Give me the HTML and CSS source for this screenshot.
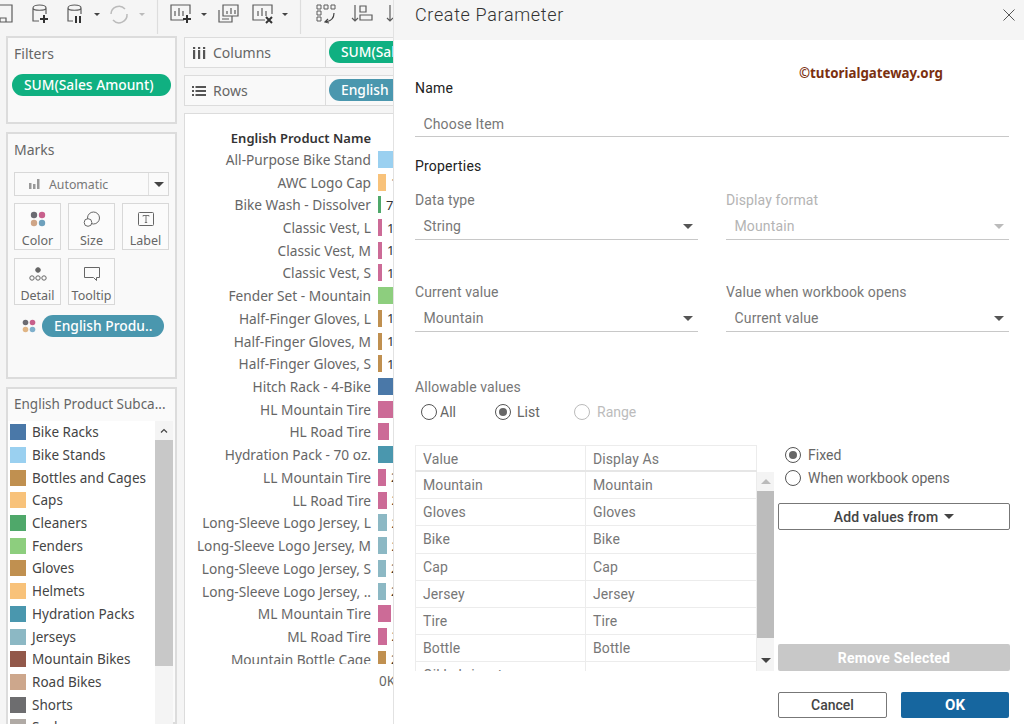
FILE: index.html
```html
<!DOCTYPE html>
<html lang="en">
<head>
<meta charset="utf-8">
<title>Create Parameter</title>
<link rel="stylesheet" href="styles.css">
</head>
<body>
<div class="app">
  <div class="workbook">
    <svg class="toolbar" width="394" height="34" viewBox="0 0 394 34" fill="none" stroke="#5c5c5c" stroke-width="1.2">
      <path d="M-2 5H12V22H-2M0 22V18H6V22"/>
      <path d="M33 8c0-4 13-4 13 0V14M33 8V21H39M33 8c0 3 13 3 13 0"/>
      <path d="M44 15V23M40 19H48" stroke="#333" stroke-width="2"/>
      <path d="M68 8c0-4 13-4 13 0V14M68 8V21H73M68 8c0 3 13 3 13 0"/>
      <path d="M76 16V23M80 16V23" stroke="#333" stroke-width="2"/>
      <path d="M94 13H100L97 16Z" fill="#444" stroke="none"/>
      <path d="M111 14a8 8 0 0 1 14-5M127 14a8 8 0 0 1-14 6" stroke="#bbb" stroke-width="1.5"/>
      <path d="M139 13H145L142 16Z" fill="#bbb" stroke="none"/>
      <path d="M157.500 0V34M300.500 0V34" stroke="#ddd"/>
      <path d="M184 20H171V5H190V14"/>
      <path d="M175 16V11M179 16V8M183 16V11"/>
      <path d="M187 15V23M183 19H191" stroke="#333" stroke-width="2"/>
      <path d="M201 13H207L204 16Z" fill="#444" stroke="none"/>
      <path d="M223 5H238V16H223ZM219 10V22H232V16"/>
      <path d="M227 14V11M231 14V8M235 14V10M222 19H229"/>
      <path d="M265 20H253V5H272V14"/>
      <path d="M258 16V11M262 16V8M266 16V11"/>
      <path d="M266 17L272 23M272 17L266 23" stroke="#333" stroke-width="2"/>
      <path d="M282 13H288L285 16Z" fill="#444" stroke="none"/>
      <path d="M317 5H321V9H317ZM324 5H328V9H324ZM331 5H335V9H331ZM317 11H321V15H317ZM317 17H321V21H317Z" stroke-width="1"/>
      <path d="M334 13c0 5-3 8-8 9M328 19L325 22L329 23" stroke="#444"/>
      <path d="M355 5V21M352 18L355 21L358 18M360 6V12H366V6ZM360 15V20H372V15Z"/>
      <path d="M390 5V21M387 18L390 21L393 18"/>
    </svg>
    <div class="panes">
      <aside class="side">
        <section class="panel filters">
          <h2 class="panel-title">Filters</h2>
          <div class="pill green wide">SUM(Sales Amount)</div>
        </section>
        <section class="panel marks">
          <h2 class="panel-title">Marks</h2>
          <div class="select-auto">
            <span class="auto-label">
              <svg width="12" height="10" viewBox="0 0 12 10" fill="#999"><rect x="0" y="4" width="2.500" height="6"/><rect x="4" y="5" width="2.500" height="5"/><rect x="8" y="0" width="2.500" height="10"/></svg>
              Automatic
            </span>
            <span class="auto-arrow"></span>
          </div>
          <div class="cards">
            <div class="card">
              <svg width="16" height="16" viewBox="0 0 16 16"><circle cx="4" cy="4" r="3.200" fill="#6b6b72"/><circle cx="12" cy="4" r="3.200" fill="#c8608c"/><circle cx="4" cy="12" r="3.200" fill="#cfa587"/><circle cx="12" cy="12" r="3.200" fill="#6ea0bc"/></svg>
              <span>Color</span>
            </div>
            <div class="card">
              <svg width="18" height="16" viewBox="0 0 18 16" fill="none" stroke="#666"><circle cx="10.500" cy="7" r="6"/><circle cx="5" cy="11.500" r="3.800" fill="#fff"/></svg>
              <span>Size</span>
            </div>
            <div class="card">
              <svg width="16" height="16" viewBox="0 0 16 16" fill="none" stroke="#666"><rect x="0.500" y="1.500" width="15" height="13" rx="1"/><path d="M5 5.500V4.500H11V5.500M8 4.500V11.500M6.800 11.500H9.200" stroke-width="0.900"/></svg>
              <span>Label</span>
            </div>
            <div class="card">
              <svg width="18" height="16" viewBox="0 0 18 16" fill="none" stroke="#666"><circle cx="9" cy="4" r="2.300" fill="#666"/><circle cx="3" cy="12" r="2.200"/><circle cx="9" cy="12" r="2.200"/><circle cx="15" cy="12" r="2.200"/></svg>
              <span>Detail</span>
            </div>
            <div class="card">
              <svg width="16" height="16" viewBox="0 0 16 16" fill="none" stroke="#666"><path d="M0.500 1.500H15.500V11.500H12.500V14.500L9.500 11.500H0.500Z"/></svg>
              <span>Tooltip</span>
            </div>
          </div>
          <div class="mark-row">
            <svg width="14" height="14" viewBox="0 0 16 16"><circle cx="4" cy="4" r="3.200" fill="#6b6b72"/><circle cx="12" cy="4" r="3.200" fill="#c8608c"/><circle cx="4" cy="12" r="3.200" fill="#e0b585"/><circle cx="12" cy="12" r="3.200" fill="#7fb0cc"/></svg>
            <div class="pill teal mark-pill">English Produ..</div>
          </div>
        </section>
        <section class="panel legend">
          <h2 class="legend-title">English Product Subca...</h2>
          <div class="legend-body">
            <ul class="legend-list">
              <li><i class="c-blue"></i>Bike Racks</li>
              <li><i class="c-sky"></i>Bike Stands</li>
              <li><i class="c-brown"></i>Bottles and Cages</li>
              <li><i class="c-orange"></i>Caps</li>
              <li><i class="c-green"></i>Cleaners</li>
              <li><i class="c-lime"></i>Fenders</li>
              <li><i class="c-brown"></i>Gloves</li>
              <li><i class="c-orange"></i>Helmets</li>
              <li><i class="c-teal"></i>Hydration Packs</li>
              <li><i class="c-jersey"></i>Jerseys</li>
              <li><i class="c-mtb"></i>Mountain Bikes</li>
              <li><i class="c-road"></i>Road Bikes</li>
              <li><i class="c-short"></i>Shorts</li>
              <li><i class="c-sock"></i>Socks</li>
            </ul>
            <div class="legend-scroll">
              <div class="legend-up">
                <svg width="8" height="5" viewBox="0 0 8 5" fill="none" stroke="#444" stroke-width="1.200"><path d="M1 4.500L4 1.500L7 4.500"/></svg>
              </div>
              <div class="legend-thumb"></div>
            </div>
          </div>
        </section>
      </aside>
      <main class="sheet">
        <div class="shelf">
          <div class="shelf-label">
            <svg width="14" height="12" viewBox="0 0 14 12" fill="#555"><rect x="1" y="3" width="2.200" height="9"/><rect x="6" y="3" width="2.200" height="9"/><rect x="11" y="3" width="2.200" height="9"/><rect x="1" y="0" width="2.200" height="2"/><rect x="6" y="0" width="2.200" height="2"/><rect x="11" y="0" width="2.200" height="2"/></svg>
            Columns
          </div>
          <div class="pill green shelf-pill">SUM(Sales Amount)</div>
        </div>
        <div class="shelf">
          <div class="shelf-label">
            <svg width="14" height="12" viewBox="0 0 14 12" fill="#555"><rect x="0" y="1" width="2" height="2"/><rect x="3.500" y="1" width="10.500" height="2"/><rect x="0" y="5" width="2" height="2"/><rect x="3.500" y="5" width="10.500" height="2"/><rect x="0" y="9" width="2" height="2"/><rect x="3.500" y="9" width="10.500" height="2"/></svg>
            Rows
          </div>
          <div class="pill teal shelf-pill">English Product Name</div>
        </div>
        <div class="view">
          <div class="chart-head">English Product Name</div>
          <div class="chart-rows">
            <div class="row"><span class="name">All-Purpose Bike Stand</span><b class="bar c-sky w-full"></b></div>
            <div class="row"><span class="name">AWC Logo Cap</span><b class="bar c-orange w-8"></b><span class="val">1</span></div>
            <div class="row"><span class="name">Bike Wash - Dissolver</span><b class="bar c-green w-3"></b><span class="val">7</span></div>
            <div class="row"><span class="name">Classic Vest, L</span><b class="bar c-pink w-4"></b><span class="val">1</span></div>
            <div class="row"><span class="name">Classic Vest, M</span><b class="bar c-pink w-4"></b><span class="val">1</span></div>
            <div class="row"><span class="name">Classic Vest, S</span><b class="bar c-pink w-4"></b><span class="val">1</span></div>
            <div class="row"><span class="name">Fender Set - Mountain</span><b class="bar c-lime w-full"></b></div>
            <div class="row"><span class="name">Half-Finger Gloves, L</span><b class="bar c-brown w-4"></b><span class="val">1</span></div>
            <div class="row"><span class="name">Half-Finger Gloves, M</span><b class="bar c-brown w-4"></b><span class="val">1</span></div>
            <div class="row"><span class="name">Half-Finger Gloves, S</span><b class="bar c-brown w-4"></b><span class="val">1</span></div>
            <div class="row"><span class="name">Hitch Rack - 4-Bike</span><b class="bar c-blue w-full"></b></div>
            <div class="row"><span class="name">HL Mountain Tire</span><b class="bar c-pink w-full"></b></div>
            <div class="row"><span class="name">HL Road Tire</span><b class="bar c-pink w-11"></b></div>
            <div class="row"><span class="name">Hydration Pack - 70 oz.</span><b class="bar c-teal w-full"></b></div>
            <div class="row"><span class="name">LL Mountain Tire</span><b class="bar c-pink w-8"></b><span class="val">2</span></div>
            <div class="row"><span class="name">LL Road Tire</span><b class="bar c-pink w-9"></b><span class="val">2</span></div>
            <div class="row"><span class="name">Long-Sleeve Logo Jersey, L</span><b class="bar c-jersey w-9"></b><span class="val">2</span></div>
            <div class="row"><span class="name">Long-Sleeve Logo Jersey, M</span><b class="bar c-jersey w-9"></b><span class="val">2</span></div>
            <div class="row"><span class="name">Long-Sleeve Logo Jersey, S</span><b class="bar c-jersey w-8"></b><span class="val">2</span></div>
            <div class="row"><span class="name">Long-Sleeve Logo Jersey, ..</span><b class="bar c-jersey w-8"></b><span class="val">2</span></div>
            <div class="row"><span class="name">ML Mountain Tire</span><b class="bar c-pink w-13"></b></div>
            <div class="row"><span class="name">ML Road Tire</span><b class="bar c-pink w-9"></b><span class="val">2</span></div>
            <div class="row"><span class="name">Mountain Bottle Cage</span><b class="bar c-brown w-8"></b><span class="val">2</span></div>
          </div>
          <div class="axis">0K</div>
        </div>
      </main>
    </div>
  </div>

  <section class="dialog">
    <header class="dialog-head">
      <h1 class="dialog-title">Create Parameter</h1>
      <svg class="close" width="12" height="12" viewBox="0 0 12 12" stroke="#555" fill="none"><path d="M0.500 0.500L11.500 11.500M11.500 0.500L0.500 11.500"/></svg>
    </header>
    <div class="dialog-body">
      <div class="watermark">©tutorialgateway.org</div>
      <div class="heading name-heading">Name</div>
      <div class="input name-input">Choose Item</div>
      <div class="heading props-heading">Properties</div>
      <div class="prop-grid">
        <div class="field">
          <label class="field-label">Data type</label>
          <div class="input select">String<span class="caret"></span></div>
        </div>
        <div class="field is-disabled">
          <label class="field-label">Display format</label>
          <div class="input select">Mountain<span class="caret"></span></div>
        </div>
        <div class="field">
          <label class="field-label">Current value</label>
          <div class="input select">Mountain<span class="caret"></span></div>
        </div>
        <div class="field">
          <label class="field-label">Value when workbook opens</label>
          <div class="input select">Current value<span class="caret"></span></div>
        </div>
      </div>
      <div class="field-label allow-label">Allowable values</div>
      <div class="radios">
        <span class="radio r-all"><i class="dot"></i>All</span>
        <span class="radio r-list"><i class="dot on"></i>List</span>
        <span class="radio r-range is-off"><i class="dot"></i>Range</span>
      </div>
      <div class="list-area">
        <div class="table-wrap">
          <div class="tr th"><span>Value</span><span>Display As</span></div>
          <div class="tbody">
            <div class="tbody-rows">
              <div class="tr"><span>Mountain</span><span>Mountain</span></div>
              <div class="tr"><span>Gloves</span><span>Gloves</span></div>
              <div class="tr"><span>Bike</span><span>Bike</span></div>
              <div class="tr"><span>Cap</span><span>Cap</span></div>
              <div class="tr"><span>Jersey</span><span>Jersey</span></div>
              <div class="tr"><span>Tire</span><span>Tire</span></div>
              <div class="tr"><span>Bottle</span><span>Bottle</span></div>
              <div class="tr"><span>Oil Lubricant</span><span></span></div>
            </div>
          </div>
        </div>
        <div class="table-scroll">
          <span class="sc-btn"><i class="tri-up"></i></span>
          <span class="sc-thumb"></span>
          <span class="sc-btn sc-down"><i class="tri-down"></i></span>
        </div>
        <div class="list-side">
          <span class="radio side-radio"><i class="dot on"></i>Fixed</span>
          <span class="radio side-radio"><i class="dot"></i>When workbook opens</span>
          <button class="btn add-btn">Add values from<i class="tri-down dark"></i></button>
          <button class="btn remove-btn">Remove Selected</button>
        </div>
      </div>
      <div class="actions">
        <button class="btn cancel">Cancel</button>
        <button class="btn ok">OK</button>
      </div>
    </div>
  </section>
</div>
</body>
</html>
```

FILE: styles.css
```css
* { box-sizing: border-box; }
html, body { margin: 0; padding: 0; height: 100%; }
body { font-family: "Noto Sans", "Open Sans", sans-serif; font-size: 13px; color: #555; background: #f5f5f5; overflow: hidden; }
h1, h2, ul { margin: 0; padding: 0; font-weight: normal; }
li { list-style: none; }
i, b { display: block; font-style: normal; }

.app { display: flex; width: 1024px; height: 724px; overflow: hidden; }
.workbook { width: 394px; flex: none; height: 724px; overflow: hidden; border-right: 1px solid #e2e2e2; }
.toolbar { display: block; }
.panes { display: flex; height: 690px; }

.side { width: 184px; flex: none; padding: 2px 7px 0 6px; display: flex; flex-direction: column; gap: 8px; border-right: 0; }
.panel { border: 2px solid #dcdcdc; background: #f9f9f9; }
.panel-title { font-size: 14px; line-height: 18px; color: #666; padding: 7px 0 0 6px; }
.filters { height: 88px; padding: 0 4px; }
.filters .panel-title { padding-left: 2px; }
.pill { border-radius: 12px; color: #fff; font-size: 13.800px; font-weight: 500; line-height: 22px; white-space: nowrap; overflow: hidden; }
.green { background: #10b081; }
.teal { background: #4a97ae; }
.wide { width: 159px; height: 22px; margin: 11px 0 0 0; padding-left: 12px; }

.marks { height: 247px; padding: 0 6px; }
.marks .panel-title { padding: 7px 0 0 0; }
.select-auto { display: flex; height: 24px; margin-top: 13px; border: 1px solid #d8d8d8; background: #fafafa; width: 155px; }
.auto-label { flex: 1; display: flex; align-items: center; gap: 8px; padding-left: 14px; color: #777; font-size: 12.300px; border-right: 1px solid #e0e0e0; }
.auto-arrow { width: 19px; position: relative; }
.auto-arrow::after { content: ""; position: absolute; left: 5px; top: 9px; border: 5px solid transparent; border-top: 5px solid #444; border-bottom: 0; }
.cards { display: grid; grid-template-columns: 47px 47px 47px; column-gap: 7px; row-gap: 8px; margin-top: 7px; }
.card { height: 47px; border: 1px solid #d8d8d8; background: #fbfbfb; display: flex; flex-direction: column; align-items: center; padding-top: 7px; }
.card svg { height: 16px; flex: none; }
.card span { font-size: 12.500px; color: #666; line-height: 16px; margin-top: 6px; }
.mark-row { display: flex; align-items: center; gap: 6px; padding-left: 8px; margin-top: 10px; }
.mark-pill { width: 122px; height: 22px; padding-left: 12px; }

.legend { flex: 1; min-height: 0; padding: 0; background: #fafafa; }
.legend-title { font-size: 13.500px; line-height: 18px; color: #666; padding: 6px 0 0 6px; height: 32px; white-space: nowrap; }
.legend-body { display: flex; background: #fff; height: 310px; overflow: hidden; margin-right: 2px; }
.legend-list { flex: 1; padding: 0 0 0 2px; }
.legend-list li { display: flex; align-items: center; height: 22.700px; color: #444; font-size: 13.500px; white-space: nowrap; }
.legend-list i { width: 16px; height: 16px; margin-right: 6px; flex: none; }
.legend-scroll { width: 18px; background: #f4f4f4; }
.legend-up { height: 19px; display: flex; align-items: center; justify-content: center; }
.legend-thumb { height: 226px; background: #c8c8c8; }

.c-blue { background: #4a78a8; }
.c-sky { background: #9ad0f0; }
.c-brown { background: #c09050; }
.c-orange { background: #f8c27a; }
.c-green { background: #4fa86a; }
.c-lime { background: #8dce7e; }
.c-teal { background: #4a97ae; }
.c-jersey { background: #8cb8c4; }
.c-mtb { background: #92584a; }
.c-road { background: #cda78c; }
.c-short { background: #6d6d6f; }
.c-sock { background: #b0aaa5; }
.c-pink { background: #cc6b97; }

.sheet { flex: 1; min-width: 0; padding-top: 3px; background: #f5f5f5; }
.shelf { display: flex; height: 31px; margin-bottom: 7px; border: 1px solid #dcdcdc; border-right: 0; background: #f9f9f9; overflow: hidden; }
.shelf-label { width: 141px; flex: none; display: flex; align-items: center; gap: 7px; padding-left: 7px; border-right: 1px solid #dcdcdc; color: #666; font-size: 14px; }
.shelf-pill { height: 22px; margin: 3px 0 0 3px; padding-left: 12px; width: 160px; flex: none; }
.view { background: #fff; border: 1px solid #dcdcdc; border-right: 0; height: 612px; overflow: hidden; }
.chart-head { height: 34px; padding: 14px 0 0 0; text-align: right; font-size: 13px; line-height: 20px; font-weight: 600; color: #333; width: 186px; white-space: nowrap; }
.chart-rows { height: 516px; overflow: hidden; }
.row { display: flex; align-items: center; height: 22.720px; }
.name { width: 186px; flex: none; text-align: right; font-size: 13.700px; color: #666; white-space: nowrap; }
.bar { height: 17px; margin-left: 7px; flex: none; }
.val { font-size: 13px; color: #333; margin-left: 5px; }
.w-3 { width: 3px; }
.w-4 { width: 4px; }
.w-8 { width: 8px; }
.w-9 { width: 8.500px; }
.w-11 { width: 10.500px; }
.w-13 { width: 13px; }
.w-full { width: 20px; }
.axis { padding: 8px 0 0 194px; color: #666; font-size: 13.500px; line-height: 18px; }

.dialog { flex: 1; background: #fff; min-width: 0; }
.dialog-head { height: 40px; background: #f5f5f5; display: flex; align-items: center; justify-content: space-between; padding: 0 9px 10px 21px; }
.dialog-title { font-family: "Roboto", sans-serif; font-weight: 300; font-size: 18px; letter-spacing: 0.650px; color: #333; line-height: 28px; }
.dialog-body { position: relative; padding: 0 15px 0 21px; color: #666; font-family: "Roboto", "Noto Sans", sans-serif; font-size: 14px; }
.watermark { position: absolute; left: 405px; top: 24px; font-family: "Noto Sans", sans-serif; font-size: 13.300px; font-weight: 700; color: #7a3010; white-space: nowrap; }
.heading { color: #222; font-size: 14px; letter-spacing: 0.200px; line-height: 18px; }
.name-heading { padding-top: 39px; height: 57px; }
.input { height: 24px; border-bottom: 1px solid #c8c8c8; padding-left: 8.500px; line-height: 22px; color: #777; letter-spacing: 0.150px; }
.name-input { margin-top: 16px; height: 24px; }
.props-heading { margin-top: 20px; }
.prop-grid { display: grid; grid-template-columns: 283px 283px; column-gap: 28px; row-gap: 43px; margin-top: 16px; }
.field-label { display: block; color: #777; font-size: 14px; line-height: 18px; letter-spacing: 0.100px; }
.select { position: relative; margin-top: 4px; height: 27px; line-height: 26px; }
.caret { position: absolute; right: 5px; top: 11px; border: 5px solid transparent; border-top: 5px solid #555; border-bottom: 0; }
.is-disabled .field-label, .is-disabled .input { color: #b4b4b4; }
.is-disabled .caret { border-top-color: #bbb; }
.allow-label { margin-top: 46px; }
.radios { display: flex; height: 32px; align-items: center; position: relative; margin-top: 0; }
.radio { display: flex; align-items: center; gap: 3px; color: #666; line-height: 18px; white-space: nowrap; }
.r-all { width: 74px; margin-left: 6px; }
.r-list { width: 79px; gap: 6px; }
.r-range { gap: 7px; }
.is-off { color: #bcbcbc; }
.dot { width: 16px; height: 16px; border-radius: 50%; border: 1px solid #555; background: #fff; flex: none; position: relative; }
.dot.on::after { content: ""; position: absolute; left: 3px; top: 3px; width: 8px; height: 8px; border-radius: 50%; background: #666; }
.is-off .dot { border-color: #bbb; }

.list-area { display: grid; grid-template-columns: 342px 17px 1fr; margin-top: 17px; height: 226px; }
.table-wrap { height: 226px; overflow: hidden; }
.tr { display: grid; grid-template-columns: 171px 171px; height: 27.200px; border-bottom: 1px solid #ececec; }
.tr span { padding-left: 7px; line-height: 26px; border-right: 1px solid #ececec; color: #777; white-space: nowrap; overflow: hidden; letter-spacing: 0.100px; }
.tr span:first-child { border-left: 1px solid #ececec; }
.th { height: 27px; border-top: 1px solid #ececec; border-bottom: 2px solid #e6e6e6; }
.tbody { height: 199px; overflow: hidden; }
.table-scroll { margin-top: 27px; height: 199px; background: #f4f4f4; display: flex; flex-direction: column; }
.sc-btn { height: 19px; flex: none; display: flex; align-items: center; justify-content: center; }
.sc-thumb { height: 147px; flex: none; background: #bcbcbc; }
.sc-down { height: 33px; padding-top: 12px; }
.tri-up { border: 5px solid transparent; border-bottom: 5px solid #bbb; border-top: 0; }
.tri-down { border: 5px solid transparent; border-top: 5px solid #444; border-bottom: 0; }
.list-side { display: flex; flex-direction: column; padding-left: 4px; margin-top: -2px; }
.side-radio { gap: 7px; height: 23px; margin-left: 7px; flex: none; }
.btn { font-family: inherit; font-size: 14px; border-radius: 2px; cursor: default; }
.add-btn { height: 27px; margin-top: 14px; width: 232px; flex: none; background: #fff; border: 1px solid #777; color: #444; font-weight: 500; display: flex; align-items: center; justify-content: center; gap: 6px; letter-spacing: 0.150px; }
.remove-btn { height: 27px; margin-top: 114px; width: 232px; flex: none; background: #c8c8c8; border: 0; color: #fff; font-weight: 700; letter-spacing: 0.200px; }
.actions { display: flex; justify-content: flex-end; gap: 14px; margin-top: 21px; }
.cancel { width: 109px; height: 26px; background: #fff; border: 1px solid #777; color: #444; font-weight: 500; }
.ok { width: 108px; height: 26px; background: #16669f; border: 0; color: #fff; font-weight: 700; font-size: 15px; }
```
